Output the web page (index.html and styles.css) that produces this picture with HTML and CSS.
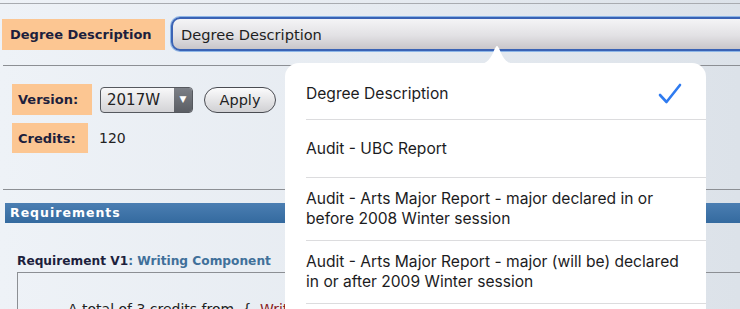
FILE: index.html
```html
<!DOCTYPE html>
<html lang="en">
<head>
<meta charset="UTF-8">
<meta name="viewport" content="width=device-width, initial-scale=1.0">
<title>Degree Navigator</title>
<link rel="stylesheet" href="styles.css">
</head>
<body>
<div class="page">
    <div class="desc-row">
        <div class="label label-wide">Degree Description</div>
        <div class="big-select">Degree Description</div>
    </div>
    <div class="rule rule-one"></div>

    <div class="fields">
        <div class="field-row">
            <div class="label label-version">Version:</div>
            <div class="small-select">
                <span class="small-select-text">2017W</span>
                <span class="small-select-arrow">&#9660;</span>
            </div>
            <button class="apply">Apply</button>
        </div>
        <div class="field-row">
            <div class="label label-credits">Credits:</div>
            <div class="credits">120</div>
        </div>
    </div>
    <div class="rule rule-two"></div>

    <div class="section-bar">Requirements</div>

    <div class="requirement">
        <div class="req-title"><b>Requirement V1</b><span class="req-name">: Writing Component</span></div>
        <div class="req-box">
            <p class="req-text">A total of 3 credits from <span class="brace">{</span> <span class="course">Writing</span></p>
        </div>
    </div>
</div>

<!-- picker popover over the page -->
<div class="popover">
    <svg class="popover-arrow" width="40" height="20" viewBox="0 0 40 20">
        <path d="M0 20 C9 20 12 17 16 9 C18 4 19 2 20 2 C21 2 22 4 24 9 C28 17 31 20 40 20 Z" fill="#fff"/>
    </svg>
    <ul class="options">
        <li class="option">
            <span>Degree Description</span>
            <svg class="check" width="24" height="22" viewBox="0 0 24 22">
                <polyline points="2,12 8.5,19 22,2" fill="none" stroke="#2f7bf0" stroke-width="2.6" stroke-linecap="round" stroke-linejoin="round"/>
            </svg>
        </li>
        <li class="option"><span>Audit - UBC Report</span></li>
        <li class="option"><span>Audit - Arts Major Report - major declared in or before 2008 Winter session</span></li>
        <li class="option"><span>Audit - Arts Major Report - major (will be) declared in or after 2009 Winter session</span></li>
        <li class="option"><span>Audit - Arts Minor Report</span></li>
    </ul>
</div>
</body>
</html>
```

FILE: styles.css
```css
body {
    margin: 0;
    font-family: "DejaVu Sans", Verdana, sans-serif;
    background: linear-gradient(90deg, #eef2f7 0%, #e6ebf1 50%, #dce2e9 100%);
    height: 309px;
    overflow: hidden;
}

.page {
    border-top: 1px solid #a8abb0;
    margin-top: 3px;
}

.desc-row {
    display: flex;
    align-items: center;
    padding: 13px 0 0 2px;
}

.label {
    background-color: #fcc692;
    color: #1d1f3d;
    font-weight: bold;
    font-size: 13px;
    display: flex;
    align-items: center;
    box-sizing: border-box;
    flex-shrink: 0;
}

.label-wide {
    width: 163px;
    height: 31px;
    padding-left: 8px;
}

.big-select {
    margin-left: 6px;
    width: 620px;
    flex-shrink: 0;
    height: 34px;
    box-sizing: border-box;
    border: 2px solid #3a63b5;
    border-radius: 9px;
    box-shadow: 0 0 0 1px #8db6e7;
    background: linear-gradient(#f4f4f6 0%, #e2e1e4 55%, #c9c6ca 100%);
    font-size: 14.6px;
    color: #1e1e22;
    padding-left: 8px;
    display: flex;
    align-items: center;
}

.rule {
    border-top: 1px solid #8c8f94;
    margin-left: 3px;
}

.rule-one {
    margin-top: 14px;
}

.fields {
    padding: 18px 0 0 12px;
    height: 123px;
    box-sizing: border-box;
}

.field-row {
    display: flex;
    align-items: center;
    margin-bottom: 8px;
}

.label-version {
    width: 80px;
    height: 31px;
    padding-left: 6px;
}

.label-credits {
    width: 76px;
    height: 30px;
    padding-left: 6px;
}

.small-select {
    margin-left: 8px;
    width: 93px;
    height: 26px;
    box-sizing: border-box;
    border: 1px solid #55585e;
    border-radius: 4px;
    background: linear-gradient(#f8f8f9, #d3d3d6);
    display: flex;
    overflow: hidden;
}

.small-select-text {
    flex: 1;
    font-size: 15px;
    color: #222;
    padding-left: 6px;
    line-height: 24px;
}

.small-select-arrow {
    width: 18px;
    background: linear-gradient(#7c7f86, #5b5e64);
    color: #fff;
    font-size: 9px;
    text-align: center;
    line-height: 22px;
}

.apply {
    margin-left: 11px;
    width: 72px;
    height: 26px;
    border: 1px solid #4a4c52;
    border-radius: 13px;
    background: linear-gradient(#fbfbfc, #d0d0d3);
    font-family: "DejaVu Sans", Verdana, sans-serif;
    font-size: 14.5px;
    color: #222;
    padding: 0;
}

.credits {
    margin-left: 11px;
    font-size: 14px;
    color: #222;
}

.section-bar {
    margin: 13px 0 0 5px;
    height: 20px;
    background: linear-gradient(#4b7eb2, #346a9f);
    color: #fff;
    font-weight: bold;
    font-size: 12.5px;
    letter-spacing: 1px;
    padding-left: 5px;
    line-height: 20px;
}

.requirement {
    padding: 30px 0 0 17px;
}

.req-title {
    font-size: 12.2px;
    color: #1d1f3d;
    line-height: 16px;
}

.req-name {
    color: #40709a;
    font-weight: bold;
}

.req-box {
    margin-top: 3px;
    border-top: 1px solid #8c8f94;
    border-left: 1px solid #8c8f94;
    height: 60px;
}

.req-text {
    margin: 28px 0 0 50px;
    font-size: 14px;
    color: #222;
}

.brace {
    margin: 0 4px;
}

.course {
    color: #8a1f1f;
}

.popover {
    position: absolute;
    left: 285px;
    top: 63px;
    width: 421px;
    height: 300px;
    background: #fff;
    border-radius: 14px;
    font-family: Inter, "Noto Sans", sans-serif;
}

.popover-arrow {
    position: absolute;
    left: 192px;
    top: -19px;
}

.options {
    list-style: none;
    margin: 0;
    padding: 0;
}

.option {
    margin-left: 21px;
    min-height: 58px;
    padding: 11px 16px 11px 0;
    box-sizing: border-box;
    border-bottom: 1px solid #dcdcde;
    display: flex;
    align-items: center;
    font-size: 15.6px;
    line-height: 20px;
    color: #1c1c1e;
    position: relative;
}

.option:first-child {
    min-height: 57px;
    padding-top: 14px;
    padding-bottom: 9px;
}

.check {
    position: absolute;
    right: 24px;
    top: 20px;
}
```
